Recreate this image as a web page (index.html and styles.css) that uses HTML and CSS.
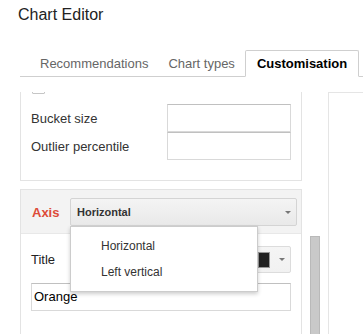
FILE: index.html
```html
<!DOCTYPE html>
<html>
<head>
<meta charset="utf-8">
<link rel="stylesheet" href="styles.css">
</head>
<body>
<div class="editor">
  <div class="title">Chart Editor</div>
  <div class="tabs">
    <div class="tab">Recommendations</div>
    <div class="tab">Chart types</div>
    <div class="tab active">Customisation</div>
  </div>
  <div class="main">
    <div class="scroller">
      <div class="panel">
        <div class="section first">
          <span class="checkbox"></span>
          <div class="row"><span class="label">Bucket size</span><span class="input"></span></div>
          <div class="row"><span class="label">Outlier percentile</span><span class="input"></span></div>
        </div>
        <div class="section axis">
          <div class="section-head">
            <span class="axis-label">Axis</span>
            <div class="select">
              <span class="select-text">Horizontal</span>
              <span class="arrow"></span>
              <div class="menu">
                <div class="menu-item">Horizontal</div>
                <div class="menu-item">Left vertical</div>
              </div>
            </div>
          </div>
          <div class="section-body">
            <div class="title-row">
              <span class="label dark">Title</span>
              <div class="color-btn"><span class="swatch"></span><span class="arrow"></span></div>
            </div>
            <div class="text-input">Orange</div>
          </div>
        </div>
      </div>
      <div class="track"><div class="thumb"></div></div>
    </div>
    <div class="preview"></div>
  </div>
</div>
</body>
</html>
```
FILE: styles.css
```css
body {
  margin: 0;
  font-family: "Liberation Sans", Arial, sans-serif;
  background: #fff;
  overflow: hidden;
}
.title {
  padding: 5px 0 0 18px;
  font-size: 16px;
  line-height: 20px;
  color: #222;
}
.tabs {
  display: flex;
  margin: 25px 0 0 20px;
  padding-left: 10px;
  border-bottom: 1px solid #cfcfcf;
}
.tab {
  padding: 0 9px;
  line-height: 25px;
  border: 1px solid transparent;
  margin-bottom: -1px;
  font-size: 13px;
  color: #666;
}
.tab.active {
  padding: 0 11px;
  border-color: #cfcfcf;
  border-bottom-color: #fff;
  background: #fff;
  color: #000;
  font-weight: bold;
  border-radius: 2px 2px 0 0;
}
.main {
  display: flex;
  margin: 15px 0 0 20px;
  height: 242px;
}
.scroller {
  display: flex;
  width: 308px;
  flex: none;
  overflow: hidden;
}
.panel {
  width: 282px;
  flex: none;
}
.section {
  border: 1px solid #e3e3e3;
}
.section.first {
  margin-top: -22px;
  padding: 10px 10px 20px;
}
.checkbox {
  display: block;
  width: 13px;
  height: 13px;
  box-sizing: border-box;
  border: 1px solid #c6c6c6;
  border-radius: 1px;
  margin: 0 0 10px 1px;
}
.row {
  display: flex;
  align-items: center;
}
.label {
  width: 136px;
  font-size: 13px;
  color: #333;
}
.label.dark {
  width: auto;
  color: #222;
}
.input {
  width: 124px;
  height: 28px;
  box-sizing: border-box;
  border: 1px solid #d9d9d9;
  border-top-color: #c0c0c0;
}
.axis {
  margin-top: 8px;
  border-bottom: none;
}
.section-head {
  display: flex;
  align-items: center;
  background: #f3f3f3;
  padding: 8px 4px 7px 11px;
  border-bottom: 1px solid #e8e8e8;
}
.axis-label {
  width: 38px;
  font-size: 13px;
  font-weight: bold;
  color: #dd4b39;
}
.select {
  position: relative;
  flex: 1;
  height: 28px;
  box-sizing: border-box;
  border: 1px solid #d4d4d4;
  border-radius: 2px;
  background: linear-gradient(#f4f4f4, #e9e9e9);
  display: flex;
  align-items: center;
  padding: 0 5px 0 6px;
}
.select-text {
  flex: 1;
  font-size: 11px;
  font-weight: bold;
  color: #333;
}
.arrow {
  width: 0;
  height: 0;
  border-left: 3px solid transparent;
  border-right: 3px solid transparent;
  border-top: 3px solid #777;
}
.menu {
  position: absolute;
  top: calc(100% + 1px);
  left: -1px;
  width: 188px;
  box-sizing: border-box;
  background: #fff;
  border: 1px solid rgba(0, 0, 0, 0.2);
  box-shadow: 0 2px 4px rgba(0, 0, 0, 0.2);
  padding: 6px 0;
  z-index: 2;
}
.menu-item {
  padding-left: 30px;
  font-size: 12px;
  line-height: 26px;
  color: #333;
}
.section-body {
  padding: 12px 10px 60px;
}
.title-row {
  display: flex;
  align-items: center;
  justify-content: space-between;
  margin-bottom: 10px;
}
.color-btn {
  display: flex;
  align-items: center;
  height: 27px;
  box-sizing: border-box;
  border: 1px solid #dcdcdc;
  border-radius: 2px;
  background: linear-gradient(#f5f5f5, #f1f1f1);
  padding: 0 5px 0 6px;
}
.swatch {
  width: 12px;
  height: 16px;
  box-sizing: border-box;
  background: #222;
  border: 1px solid #999;
  margin-right: 9px;
}
.text-input {
  height: 28px;
  box-sizing: border-box;
  border: 1px solid #d9d9d9;
  border-top-color: #c0c0c0;
  padding-left: 2px;
  font-size: 13px;
  line-height: 26px;
  color: #000;
}
.track {
  width: 26px;
  flex: none;
}
.thumb {
  margin: 144px 0 0 8px;
  width: 10px;
  height: 200px;
  box-sizing: border-box;
  background: #c9c9c9;
  border: 1px solid #b9b9b9;
}
.preview {
  flex: 1;
  border-left: 1px solid #e5e5e5;
  border-top: 1px solid #e5e5e5;
}
```
